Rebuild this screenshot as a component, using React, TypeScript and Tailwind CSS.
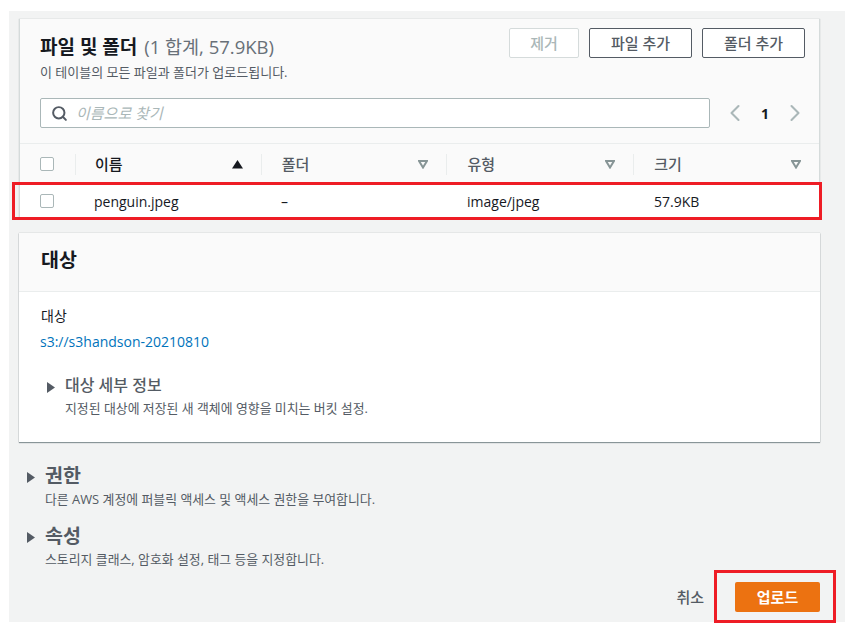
import { ChevronLeft, ChevronRight, Search } from "lucide-react";

const font = { fontFamily: '"Open Sans","Noto Sans CJK KR",sans-serif' };

function Caret({ className }: { className: string }) {
  return (
    <svg width="8" height="11" viewBox="0 0 8 11" className={className} fill="currentColor">
      <path d="M0 0 L8 5.5 L0 11 Z" />
    </svg>
  );
}

function SortDown() {
  return (
    <svg width="10" height="9" viewBox="0 0 10 9" className="text-[#879596]" fill="none" stroke="currentColor" strokeWidth="2">
      <path d="M1 1 H9 L5 7.5 Z" />
    </svg>
  );
}

function SortUp() {
  return (
    <svg width="11" height="9" viewBox="0 0 11 9" className="text-[#16191f]" fill="currentColor">
      <path d="M0 8.5 H11 L5.5 0 Z" />
    </svg>
  );
}

function HeaderCell({ label, width, active }: { label: string; width: string; active?: boolean }) {
  return (
    <div className={`${width} flex items-center justify-between h-[21px] border-l border-[#eaeded] ${active ? "pl-[19px]" : "pl-[20px]"} pr-[18px]`}>
      <span className={`text-[15px] font-medium ${active ? "text-[#16191f]" : "text-[#545b64]"}`}>{label}</span>
      {active ? <SortUp /> : <SortDown />}
    </div>
  );
}

function Box() {
  return <div className="w-[14px] h-[14px] rounded-[2px] border border-[#aab7b8] bg-white" />;
}

export default function App() {
  return (
    <div className="relative w-[853px] h-[637px] bg-white overflow-hidden pt-[11px] pl-[9px]" style={font}>
      <div className="w-[836px] h-[611px] bg-[#f2f3f3] pl-[10px] pt-[8px]">
        <div className="w-[801px] h-[199px] bg-[#fafafa] border-l border-r border-[#d5dbdb] shadow-[0_0_1px_rgba(0,28,36,0.25)]">
          <div className="flex justify-between pl-[20px] pr-[14px] pt-[9px] h-[70px]">
            <div className="pt-[7px]">
              <div className="text-[19px] leading-[24px] font-bold text-[#16191f]">
                파일 및 폴더 <span className="ml-[2px] text-[18.5px] font-normal text-[#687078]">(1 합계, 57.9KB)</span>
              </div>
              <div className="text-[13px] leading-[16px] mt-[5px] text-[#545b64]">이 테이블의 모든 파일과 폴더가 업로드됩니다.</div>
            </div>
            <div className="flex gap-[10px] h-[30px]">
              <div className="w-[70px] flex items-center justify-center border border-[#d5dbdb] rounded-[2px] bg-white text-[15px] font-medium text-[#aab7b8]">제거</div>
              <div className="w-[103px] flex items-center justify-center border border-[#545b64] rounded-[2px] bg-white text-[15px] font-medium text-[#545b64]">파일 추가</div>
              <div className="w-[103px] flex items-center justify-center border border-[#545b64] rounded-[2px] bg-white text-[15px] font-medium text-[#545b64]">폴더 추가</div>
            </div>
          </div>
          <div className="flex items-center pl-[20px] h-[30px] mt-[9px]">
            <div className="w-[670px] h-[30px] flex items-center gap-[8px] pl-[10px] bg-white border border-[#aab7b8] rounded-[2px]">
              <Search size={17} strokeWidth={2.8} className="text-[#545b64]" />
              <span className="text-[15px] italic text-[#aab7b8]">이름으로 찾기</span>
            </div>
            <div className="flex items-center ml-[11px] text-[#aab7b8]">
              <ChevronLeft size={28} strokeWidth={1.8} />
              <span className="text-[14px] font-bold text-[#16191f] w-[32px] text-center">1</span>
              <ChevronRight size={28} strokeWidth={1.8} />
            </div>
          </div>
          <div className="flex items-center mt-[15px] h-[40px] pt-[1px] border-t border-[#eaeded] pl-[20px]">
            <div className="w-[35px]"><Box /></div>
            <HeaderCell label="이름" width="w-[186px]" active />
            <HeaderCell label="폴더" width="w-[186px]" />
            <HeaderCell label="유형" width="w-[187px]" />
            <HeaderCell label="크기" width="w-[186px]" />
          </div>
          <div className="flex items-center h-[34px] pt-[1px] bg-white pl-[20px] text-[14px] text-[#16191f]">
            <div className="w-[54px]"><Box /></div>
            <div className="w-[187px] pt-[2px]">penguin.jpeg</div>
            <div className="w-[186px] pt-[2px]">–</div>
            <div className="w-[187px] pt-[2px]">image/jpeg</div>
            <div className="pt-[2px]">57.9KB</div>
          </div>
        </div>

        <div className="w-[801px] h-[209px] mt-[15px] bg-white shadow-[0_1px_1px_0_rgba(0,28,36,0.4),0_0_1px_0_rgba(0,28,36,0.3)]">
          <div className="h-[59px] flex items-center pl-[22px] bg-[#fafafa] border-b border-[#eaeded]">
            <span className="text-[19.5px] font-bold text-[#16191f] -mt-[5px]">대상</span>
          </div>
          <div className="pl-[21px] pt-[14px]">
            <div className="text-[14px] leading-[20px] ml-[1px] text-[#16191f]">대상</div>
            <div className="text-[14px] leading-[20px] mt-[6px] text-[#0073bb]">s3://s3handson-20210810</div>
            <div className="flex mt-[23px] pl-[7px]">
              <Caret className="text-[#545b64] mt-[7px] mr-[10px]" />
              <div>
                <div className="text-[16px] leading-[20px] font-medium text-[#545b64]">대상 세부 정보</div>
                <div className="text-[12.9px] leading-[16px] mt-[5px] text-[#545b64]">지정된 대상에 저장된 새 객체에 영향을 미치는 버킷 설정.</div>
              </div>
            </div>
          </div>
        </div>

        <div className="flex mt-[22px] pl-[8px]">
          <Caret className="text-[#545b64] mt-[8px] mr-[10px]" />
          <div>
            <div className="text-[19.5px] leading-[24px] font-bold text-[#545b64]">권한</div>
            <div className="text-[12.9px] leading-[16px] mt-[3px] text-[#545b64]">다른 AWS 계정에 퍼블릭 액세스 및 액세스 권한을 부여합니다.</div>
          </div>
        </div>
        <div className="flex mt-[17px] pl-[8px]">
          <Caret className="text-[#545b64] mt-[8px] mr-[10px]" />
          <div>
            <div className="text-[19.5px] leading-[24px] font-bold text-[#545b64]">속성</div>
            <div className="text-[12.9px] leading-[16px] mt-[3px] text-[#545b64]">스토리지 클래스, 암호화 설정, 태그 등을 지정합니다.</div>
          </div>
        </div>

        <div className="flex items-center justify-end w-[801px] mt-[15px] gap-[31px]">
          <span className="text-[15px] font-medium text-[#545b64]">취소</span>
          <div className="w-[85px] h-[30px] flex items-center justify-center rounded-[2px] bg-[#ec7211] text-[15px] font-bold text-white">업로드</div>
        </div>
      </div>

      <div className="absolute left-[12px] top-[182px] w-[810px] h-[38px] border-[3px] border-[#ee1c25]" />
      <div className="absolute left-[714px] top-[570px] w-[122px] h-[53px] border-[3px] border-[#ee1c25]" />
    </div>
  );
}
